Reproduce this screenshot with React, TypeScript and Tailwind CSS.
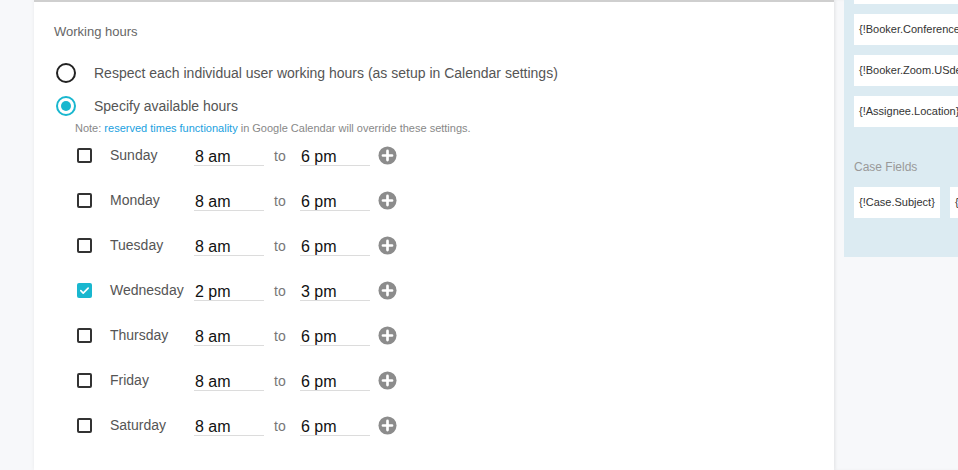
const days = [
  { name: 'Sunday', from: '8 am', to: '6 pm', on: false },
  { name: 'Monday', from: '8 am', to: '6 pm', on: false },
  { name: 'Tuesday', from: '8 am', to: '6 pm', on: false },
  { name: 'Wednesday', from: '2 pm', to: '3 pm', on: true },
  { name: 'Thursday', from: '8 am', to: '6 pm', on: false },
  { name: 'Friday', from: '8 am', to: '6 pm', on: false },
  { name: 'Saturday', from: '8 am', to: '6 pm', on: false },
];

function Checkbox({ on }: { on: boolean }) {
  if (on) {
    return (
      <div className="w-[15px] h-[15px] rounded-[2px] bg-[#19b7cf] flex items-center justify-center">
        <svg width="11" height="11" viewBox="0 0 12 12" fill="none">
          <path d="M2 6.2l2.6 2.6L10 3.4" stroke="white" strokeWidth="1.8" strokeLinecap="round" strokeLinejoin="round" />
        </svg>
      </div>
    );
  }
  return <div className="w-[15px] h-[15px] rounded-[2px] border-2 border-[#333]" />;
}

function PlusIcon() {
  return (
    <svg width="19" height="19" viewBox="0 0 20 20">
      <circle cx="10" cy="10" r="9.5" fill="#8c8c8c" />
      <path d="M10 5.2v9.6M5.2 10h9.6" stroke="white" strokeWidth="2.8" strokeLinecap="round" />
    </svg>
  );
}

function TimeBox({ value }: { value: string }) {
  return (
    <div className="w-[70px] h-[21px] border-b border-[#dcdcdc] pl-[1px] text-[16px] leading-[18px] text-[#111] pt-[3px]">
      {value}
    </div>
  );
}

function DayRow({ name, from, to, on }: { name: string; from: string; to: string; on: boolean }) {
  return (
    <div className="flex items-center h-[45px] pl-[23px]">
      <Checkbox on={on} />
      <div className="ml-[18px] w-[84px] text-[14px] text-[#555] mb-[1px]">{name}</div>
      <TimeBox value={from} />
      <div className="w-[36px] pl-[10px] text-[14px] text-[#777] pt-[1px]">to</div>
      <TimeBox value={to} />
      <div className="ml-[8px] flex items-center">
        <PlusIcon />
      </div>
    </div>
  );
}

function Chip({ label, className = '' }: { label: string; className?: string }) {
  return (
    <div className={`h-[31px] bg-white flex items-center px-[5px] text-[11px] text-[#333] whitespace-nowrap overflow-hidden ${className}`}>
      {label}
    </div>
  );
}

export default function App() {
  return (
    <div className="w-[958px] h-[470px] overflow-hidden flex bg-[#f7f8fa] font-['Liberation_Sans',Arial,sans-serif]">
      <div className="w-[34px] shrink-0" />
      <div className="w-[800px] shrink-0 bg-white border-t-2 border-[#cfcfcf] shadow-[0_0_4px_rgba(0,0,0,0.06)] pl-[20px] pt-[22px]">
        <div className="text-[13px] text-[#666] leading-[16px]">Working hours</div>

        <div className="mt-[22px] flex items-center h-[22px]">
          <div className="ml-[2px] w-[20px] h-[20px] rounded-full border-2 border-[#222]" />
          <div className="ml-[18px] text-[14px] text-[#555]">
            Respect each individual user working hours (as setup in Calendar settings)
          </div>
        </div>

        <div className="mt-[11px] flex items-center h-[22px]">
          <div className="ml-[2px] w-[20px] h-[20px] rounded-full border-2 border-[#19b7cf] flex items-center justify-center">
            <div className="w-[10px] h-[10px] rounded-full bg-[#19b7cf]" />
          </div>
          <div className="ml-[18px] text-[14px] text-[#555]">Specify available hours</div>
        </div>

        <div className="ml-[21px] mt-[5px] text-[11px] text-[#888] leading-[13px]">
          Note: <span className="text-[#1a9fe0]">reserved times functionality</span> in Google Calendar will override these settings.
        </div>

        <div className="-mt-[2px]">
          {days.map((d) => (
            <DayRow key={d.name} {...d} />
          ))}
        </div>
      </div>

      <div className="flex-1 pl-[10px] shadow-[inset_2px_0_3px_rgba(0,0,0,0.04)]">
        <div className="h-[257px] bg-[#dcebf2] pl-[10px] overflow-hidden">
          <div className="flex flex-col gap-[10px] -mt-[27px]">
            <Chip label="" className="w-[140px]" />
            <Chip label="{!Booker.Conference}" className="w-[140px]" />
            <Chip label="{!Booker.Zoom.USdefault}" className="w-[140px]" />
            <Chip label="{!Assignee.Location}" className="w-[140px]" />
          </div>
          <div className="mt-[33px] text-[12px] text-[#999] leading-[14px]">Case Fields</div>
          <div className="mt-[13px] flex gap-[10px]">
            <Chip label="{!Case.Subject}" className="w-[86px] shrink-0" />
            <Chip label="{!Case.Status}" className="w-[86px] shrink-0" />
          </div>
        </div>
      </div>
    </div>
  );
}
